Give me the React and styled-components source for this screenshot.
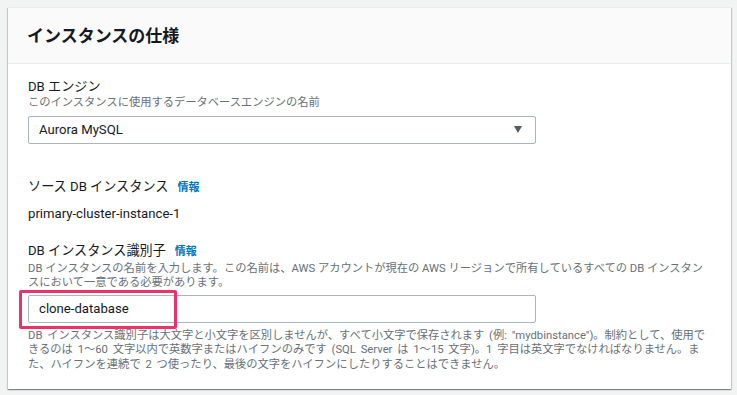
import React from "react";
import styled, { createGlobalStyle } from "styled-components";

const GlobalStyle = createGlobalStyle`
  html, body {
    margin: 0;
    padding: 0;
    background: #f2f3f3;
  }
  body {
    font-family: Roboto, "Noto Sans CJK JP", sans-serif;
    color: #16191f;
  }
`;

const Page = styled.div`
  padding: 7px 6px 7px 8px;
`;

const Card = styled.section`
  background: #fff;
  box-shadow: 0 1px 1px 0 rgba(0, 28, 36, 0.3), 1px 1px 1px 0 rgba(0, 28, 36, 0.15),
    -1px 1px 1px 0 rgba(0, 28, 36, 0.15);
  border-top: 1px solid #eaeded;
`;

const Header = styled.header`
  height: 55px;
  display: flex;
  align-items: center;
  padding: 0 19px;
  background: #fafafa;
  border-bottom: 1px solid #eaeded;
`;

const Title = styled.h2`
  margin: 0;
  font-size: 17px;
  font-weight: 700;
  line-height: 22px;
`;

const Body = styled.div`
  padding: 14px 19px 17px 20px;
`;

const Field = styled.div`
  margin-top: ${p => p.$gap || 0}px;
`;

const Label = styled.div`
  font-size: 13.15px;
  line-height: 18px;
  display: flex;
  align-items: baseline;
  gap: 9px;
`;

const Info = styled.a`
  color: #0073bb;
  font-size: 11px;
  font-weight: 700;
  text-decoration: none;
`;

const Hint = styled.div`
  font-size: 11.27px;
  line-height: 14.5px;
  color: #687078;
  margin-top: ${p => p.$top || 0}px;
  word-spacing: ${p => (p.$loose ? "2px" : "0")};
`;

const Value = styled.div`
  margin-top: 8px;
  font-size: 13.15px;
  line-height: 18px;
`;

const Select = styled.div`
  margin-top: 5px;
  width: 508px;
  height: 28px;
  box-sizing: border-box;
  border: 1px solid #aab7b8;
  border-radius: 2px;
  display: flex;
  align-items: center;
  justify-content: space-between;
  padding: 0 13px 0 10px;
  font-size: 13.15px;
`;

const InputWrap = styled.div`
  position: relative;
  margin-top: 4px;
  width: 508px;
`;

const Input = styled.div`
  height: 28px;
  box-sizing: border-box;
  border: 1px solid #aab7b8;
  border-radius: 2px;
  display: flex;
  align-items: center;
  padding: 0 10px;
  font-size: 13.15px;
`;

const Highlight = styled.div`
  position: absolute;
  left: -9px;
  top: -5px;
  width: 158px;
  height: 39px;
  box-sizing: border-box;
  border: 3px solid #e8336b;
  border-radius: 2px;
  pointer-events: none;
`;

const Caret = () => (
  <svg width="8" height="7" viewBox="0 0 8 7">
    <path d="M0 0h8L4 7z" fill="#545b64" />
  </svg>
);

export default function App() {
  return (
    <>
      <GlobalStyle />
      <Page>
        <Card>
          <Header>
            <Title>インスタンスの仕様</Title>
          </Header>
          <Body>
            <Field>
              <Label>DB エンジン</Label>
              <Hint>このインスタンスに使用するデータベースエンジンの名前</Hint>
              <Select>
                <span>Aurora MySQL</span>
                <Caret />
              </Select>
            </Field>
            <Field $gap={34}>
              <Label>
                ソース DB インスタンス<Info href="#">情報</Info>
              </Label>
              <Value>primary-cluster-instance-1</Value>
            </Field>
            <Field $gap={19}>
              <Label>
                DB インスタンス識別子<Info href="#">情報</Info>
              </Label>
              <Hint $top={1}>
                DB インスタンスの名前を入力します。この名前は、AWS アカウントが現在の AWS リージョンで所有しているすべての DB インスタンスにおいて一意である必要があります。
              </Hint>
              <InputWrap>
                <Input>clone-database</Input>
                <Highlight />
              </InputWrap>
              <Hint $top={6} $loose>
                DB インスタンス識別子は大文字と小文字を区別しませんが、すべて小文字で保存されます (例: "mydbinstance")。制約として、使用できるのは 1〜60 文字以内で英数字またはハイフンのみです (SQL Server は 1〜15 文字)。1 字目は英文字でなければなりません。また、ハイフンを連続で 2 つ使ったり、最後の文字をハイフンにしたりすることはできません。
              </Hint>
            </Field>
          </Body>
        </Card>
      </Page>
    </>
  );
}
